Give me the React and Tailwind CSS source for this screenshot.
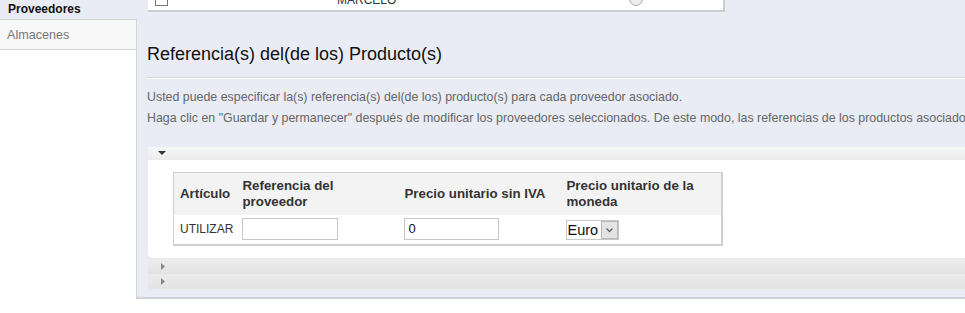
export default function App() {
  const font = { fontFamily: '"Liberation Sans", Arial, sans-serif' };
  return (
    <div className="w-[965px] h-[313px] overflow-hidden bg-white" style={font}>
      <div className="flex h-[299px]">
        {/* Sidebar */}
        <div className="w-[137px] flex flex-col shrink-0">
          <div className="h-[19px] bg-[#e9ecf4] flex items-end pl-[8px] pb-[4px]">
            <span className="text-[12px] font-bold text-[#111] leading-[12px]">Proveedores</span>
          </div>
          <div className="h-[31px] bg-[#f8f8f8] border-y border-r border-[#d3d3d3] flex items-center pl-[7px]">
            <span className="text-[12.6px] text-[#777] pt-[1px]">Almacenes</span>
          </div>
          <div className="flex-1 bg-white border-r border-[#d3d3d3]" />
        </div>
        {/* Main */}
        <div className="flex-1 min-w-0 bg-[#e9ecf4] border-b-2 border-[#cfd2d9] overflow-hidden">
          {/* top box (cut off) */}
          <div className="ml-[11px] w-[577px] h-[25px] -mt-[13px] bg-white border-r-2 border-b-2 border-[#cdcdcd] flex items-end pb-[4px]">
            <div className="ml-[7px] w-[13px] h-[13px] border border-[#777] bg-white" />
            <div className="ml-[169px] text-[12px] text-[#333] leading-[12px]">MARCELO</div>
            <div className="ml-[233px] w-[14px] h-[14px] rounded-full border border-[#aaa] bg-[#eee]" />
          </div>
          {/* heading */}
          <div className="ml-[10px] mt-[31px] text-[18px] leading-[22px] text-[#111] whitespace-nowrap">
            Referencia(s) del(de los) Producto(s)
          </div>
          <div className="ml-[10px] mt-[12px] h-[2px] w-[900px] bg-[#d4d6dc] border-b border-white" />
          <div className="ml-[10px] mt-[11px] text-[12.4px] leading-[14px] text-[#666] whitespace-nowrap">
            Usted puede especificar la(s) referencia(s) del(de los) producto(s) para cada proveedor asociado.
          </div>
          <div className="ml-[10px] mt-[7px] text-[12.4px] leading-[14px] text-[#666] whitespace-nowrap">
            Haga clic en "Guardar y permanecer" después de modificar los proveedores seleccionados. De este modo, las referencias de los productos asociados se guardarán.
          </div>
          {/* panel */}
          <div className="ml-[11px] mt-[22px] w-[900px]">
            <div className="h-[13px] bg-gradient-to-b from-[#f7f7f7] to-[#ececec] flex items-center pl-[10px]">
              <svg width="8" height="5" viewBox="0 0 8 5"><path d="M0 0 H8 L4 4 Z" fill="#333" /></svg>
            </div>
            <div className="bg-white rounded-bl-[5px] pt-[12px] pb-[12px] pl-[25px]">
              <table className="border-collapse border-l border-t border-r-2 border-b-2 border-[#cfcfcf] text-[#333]">
                <thead>
                  <tr className="bg-[#f3f3f3] h-[42px] text-left align-middle">
                    <th className="w-[64px] pl-[6px] text-[13.3px] font-bold leading-[16px]">Artículo</th>
                    <th className="w-[162px] pl-[5px] text-[13.3px] font-bold leading-[16px]">Referencia del<br />proveedor</th>
                    <th className="w-[162px] pl-[5px] text-[13.3px] font-bold leading-[16px]">Precio unitario sin IVA</th>
                    <th className="w-[160px] pl-[5px] text-[13.3px] font-bold leading-[16px]">Precio unitario de la<br />moneda</th>
                  </tr>
                </thead>
                <tbody>
                  <tr className="h-[30px] bg-white">
                    <td className="pl-[6px] text-[12px]">UTILIZAR</td>
                    <td className="pl-[4px]">
                      <div className="w-[96px] h-[22px] border border-[#c8c8c8] bg-white" />
                    </td>
                    <td className="pl-[4px]">
                      <div className="w-[95px] h-[22px] border border-[#c8c8c8] bg-white flex items-center pl-[4px] text-[13px] text-[#111]">0</div>
                    </td>
                    <td className="pl-[4px]">
                      <div className="w-[53px] h-[20px] mt-[2px] border border-[#c8c8c8] bg-white flex items-center">
                        <span className="pl-[1px] text-[14.5px] text-[#111] flex-1 leading-[14px]">Euro</span>
                        <span className="w-[17px] h-[18px] bg-[#e4e4e4] border border-[#b8b8b8] flex items-center justify-center">
                          <svg width="7" height="5" viewBox="0 0 7 5"><path d="M0.5 0.5 L3.5 3.5 L6.5 0.5" fill="none" stroke="#666" strokeWidth="1.3" /></svg>
                        </span>
                      </div>
                    </td>
                  </tr>
                </tbody>
              </table>
            </div>
            <div className="mt-[1px] h-[15px] bg-gradient-to-b from-[#ececec] to-[#e3e3e3] flex items-center pl-[13px]">
              <svg width="4" height="7" viewBox="0 0 4 7"><path d="M0 0 L4 3.5 L0 7 Z" fill="#888" /></svg>
            </div>
            <div className="h-[15px] bg-gradient-to-b from-[#ececec] to-[#e3e3e3] rounded-bl-[4px] flex items-center pl-[13px]">
              <svg width="4" height="7" viewBox="0 0 4 7"><path d="M0 0 L4 3.5 L0 7 Z" fill="#888" /></svg>
            </div>
          </div>
        </div>
      </div>
    </div>
  );
}
